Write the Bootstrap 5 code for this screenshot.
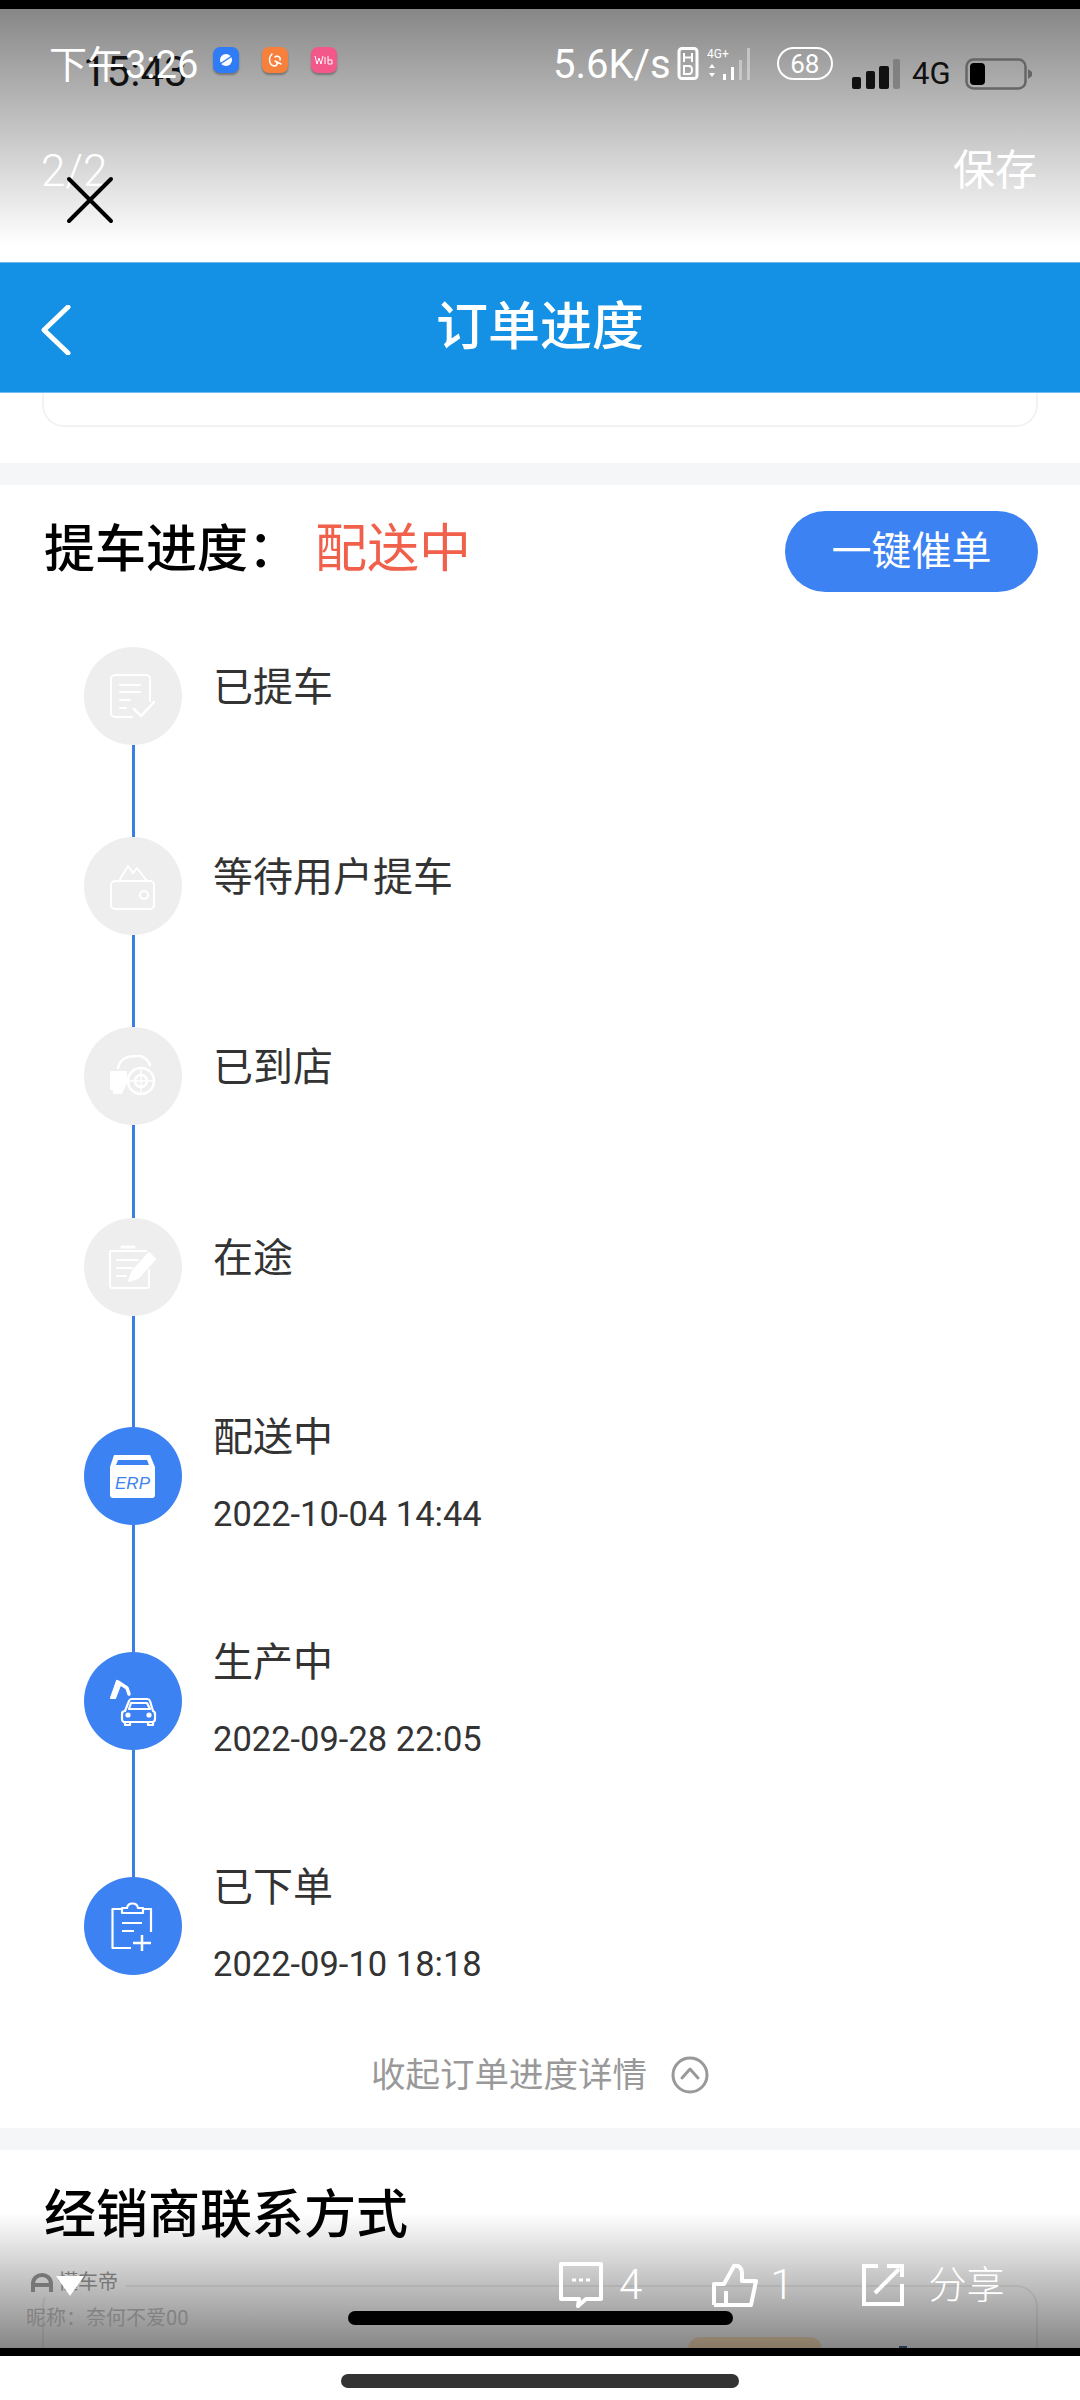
<!DOCTYPE html>
<html lang="zh-CN">
<head>
    <meta charset="UTF-8">
    <title>订单进度</title>
    <link href="https://cdn.jsdelivr.net/npm/bootstrap@5.3.3/dist/css/bootstrap.min.css" rel="stylesheet">
    <style>
        body { width: 1080px; height: 2400px; overflow: hidden; background: #fff; font-family: Roboto, "Noto Sans CJK SC", sans-serif; color: #333; }
        .edge-bar { height: 9px; background: #000; }
        .edge-bar-low { height: 8px; background: #000; }
        .screen { height: 2339px; overflow: hidden; }
        .top-gap { height: 253px; }
        .app-head { height: 131px; background: #1490e4; border-top: 1px solid #6fbcf0; border-bottom: 1px solid #6fbcf0; position: relative; }
        .app-head h1 { font-size: 52px; line-height: 1; font-weight: 500; color: #fff; margin: 0; }
        .back-arrow { position: absolute; left: 40px; top: 42px; }
        .card-tail { height: 34px; margin: 0 42px 36px; border: 2px solid #f2f2f2; border-top: 0; border-radius: 0 0 22px 22px; }
        .band { height: 22px; background: #f5f6f7; }
        .progress-head { padding: 26px 42px 0 44px; height: 162px; }
        .progress-title { font-size: 51px; line-height: 72px; font-weight: 500; color: #000; margin: 3px 0 0; }
        .progress-state { font-size: 52px; line-height: 72px; color: #f0604a; margin: 3px 0 0 16px; }
        .hurry-btn { width: 253px; height: 81px; background: #3d82f2; border: 0; color: #fff; font-size: 40px; line-height: 1; }
        .step-row { padding-left: 84px; }
        .step-h190 { height: 190px; }
        .step-h191 { height: 191px; }
        .step-h209 { height: 209px; }
        .step-h225 { height: 225px; }
        .step-rail { width: 98px; flex: none; }
        .step-dot { width: 98px; height: 98px; flex: none; background: #eee; }
        .step-dot-on { background: #3d82f2; }
        .step-line { width: 3px; flex: 1; background: #3a80e4; margin-left: 48px; }
        .step-text { margin-left: 31px; padding-top: 13px; }
        .step-text-dated { margin-top: -17px; padding-top: 0; }
        .step-name { font-size: 40px; line-height: 56px; color: #333; }
        .step-time { font-size: 34.5px; line-height: 44px; color: #333; margin-top: 26px; }
        .fold-row { height: 142px; padding-top: 66px; color: #999; font-size: 34.5px; line-height: 46px; }
        .dealer-title { font-size: 52px; line-height: 72px; font-weight: 500; color: #000; margin: 30px 0 0 44px; }
        .dealer-card { height: 200px; margin: 33px 42px 0; border: 2px solid #eee; border-radius: 22px; position: relative; }
        .dealer-gap { position: absolute; left: -4px; top: -10px; width: 86px; height: 20px; background: #fff; }
        .dealer-btn { position: absolute; left: 644px; top: 50px; width: 134px; height: 60px; background: #ffe6c0; border-radius: 12px; }
        .dealer-dot { position: absolute; left: 855px; top: 59px; width: 8px; height: 30px; background: #4a6a90; }
        .shade { position: absolute; left: 0; width: 1080px; pointer-events: none; }
        .shade-top { top: 9px; height: 236px; background: linear-gradient(rgba(0,0,0,.47), rgba(0,0,0,0)); }
        .shade-low { top: 2213px; height: 135px; background: linear-gradient(rgba(0,0,0,0), rgba(0,0,0,.47)); }
        .over { position: absolute; line-height: 1; white-space: nowrap; }
        .clock-dark { left: 83px; top: 51px; font-size: 42px; color: #111; }
        .clock-light { left: 49px; top: 46px; font-size: 38px; color: #fff; }
        .app-badges { left: 213px; top: 47px; gap: 23px; }
        .app-badge { width: 26px; height: 26px; border-radius: 7px; box-shadow: 0 2px 2px rgba(0,0,0,.3); }
        .badge-blue { background: #2f7cf6; }
        .badge-orange { background: #f6803c; }
        .badge-pink { background: #f4578a; }
        .net-group { left: 553px; top: 47px; color: #fff; }
        .net-speed { font-size: 40px; line-height: 36px; margin-right: 6px; }
        .net-signal { margin: 0 14px 0 8px; }
        .net-rate { width: 56px; height: 33px; font-size: 26px; line-height: 1; }
        .sim-group { left: 852px; top: 58px; color: #111; }
        .sim-type { font-size: 31px; line-height: 30px; margin: 0 14px 0 12px; }
        .page-count { left: 41px; top: 149px; font-size: 44px; font-weight: 300; color: #fff; }
        .close-x { left: 66px; top: 176px; }
        .save-link { left: 953px; top: 150px; font-size: 42px; color: #fff; }
        .photo-tools { left: 559px; top: 2262px; color: #fff; font-size: 42px; line-height: 44px; font-weight: 300; }
        .tool-count { margin: 0 70px 0 16px; }
        .tool-count-b { margin: 0 67px 0 12px; }
        .share-label { margin-left: 24px; font-size: 38px; }
        .brand-mark { left: 30px; top: 2271px; color: #777; font-size: 20px; line-height: 22px; }
        .nick-name { left: 26px; top: 2308px; font-size: 20px; color: #828282; }
        .pointer-down { left: 56px; top: 2276px; width: 0; height: 0; border-left: 14px solid transparent; border-right: 14px solid transparent; border-top: 20px solid #fff; }
        .pill-dark { left: 348px; top: 2311px; width: 385px; height: 14px; background: #000; border-radius: 7px; }
        .nav-zone { height: 44px; padding-top: 18px; }
        .nav-pill { width: 398px; height: 14px; background: #333; border-radius: 7px; }
    </style>
</head>
<body class="position-relative">
    <div class="edge-bar"></div>
    <div class="screen">
        <div class="top-gap"></div>

        <header class="app-head d-flex align-items-center justify-content-center">
            <svg class="back-arrow" width="32" height="50" viewBox="0 0 32 50" fill="none" stroke="#fff" stroke-width="5" stroke-linecap="round" stroke-linejoin="round"><path d="M28 2 L4 25 L28 48"/></svg>
            <h1>订单进度</h1>
        </header>

        <div class="card-tail"></div>
        <div class="band"></div>

        <div class="progress-head d-flex justify-content-between align-items-start">
            <div class="d-flex">
                <h2 class="progress-title">提车进度：</h2>
                <span class="progress-state">配送中</span>
            </div>
            <button class="btn rounded-pill hurry-btn p-0">一键催单</button>
        </div>

        <div class="step-row step-h190 d-flex">
            <div class="step-rail d-flex flex-column">
                <div class="step-dot rounded-circle">
                    <svg width="98" height="98" viewBox="0 0 98 98" fill="none" stroke="#fff" stroke-width="2" stroke-linecap="round"><path d="M48 70 H31 a4 4 0 0 1 -4 -4 V32 a4 4 0 0 1 4 -4 H62 a4 4 0 0 1 4 4 V54"/><path d="M36 38 H56 M36 45 H56 M36 53 H46 M36 61 H42"/><path d="M50 62 L57 69 L70 55" stroke-width="2.5"/></svg>
                </div>
                <div class="step-line"></div>
            </div>
            <div class="step-text"><div class="step-name">已提车</div></div>
        </div>

        <div class="step-row step-h190 d-flex">
            <div class="step-rail d-flex flex-column">
                <div class="step-dot rounded-circle">
                    <svg width="98" height="98" viewBox="0 0 98 98" fill="none" stroke="#fff" stroke-width="2" stroke-linecap="round" stroke-linejoin="round"><rect x="27" y="44" width="43" height="28" rx="4"/><path d="M35 44 L44 29 L49 36 L53 31 L63 44"/><circle cx="60" cy="58" r="4"/></svg>
                </div>
                <div class="step-line"></div>
            </div>
            <div class="step-text"><div class="step-name">等待用户提车</div></div>
        </div>

        <div class="step-row step-h191 d-flex">
            <div class="step-rail d-flex flex-column">
                <div class="step-dot rounded-circle">
                    <svg width="98" height="98" viewBox="0 0 98 98" fill="none" stroke="#fff" stroke-width="2" stroke-linecap="round" stroke-linejoin="round"><path d="M34 41 C36 31 44 29 54 29 C60 29 64 33 66 38" stroke-width="2.5"/><path d="M27 45 H42 V56 L37 66 H30 V62 H27 Z" fill="#fff"/><circle cx="57" cy="54" r="13" stroke-width="2.5"/><circle cx="57" cy="54" r="6" stroke-width="2.5"/><path d="M57 41 V67 M44 54 H70" stroke-width="1.5"/></svg>
                </div>
                <div class="step-line"></div>
            </div>
            <div class="step-text"><div class="step-name">已到店</div></div>
        </div>

        <div class="step-row step-h209 d-flex">
            <div class="step-rail d-flex flex-column">
                <div class="step-dot rounded-circle">
                    <svg width="98" height="98" viewBox="0 0 98 98" fill="none" stroke="#fff" stroke-width="2" stroke-linecap="round" stroke-linejoin="round"><path d="M62 33 H26 V68 a2 2 0 0 0 2 2 H63 a2 2 0 0 0 2 -2 V52"/><path d="M38 29 H50" stroke-width="3"/><path d="M33 42 H54 M33 50 H48 M33 58 H42"/><path d="M45 63 L48 54 L65 35 L71 41 L54 60 Z" fill="#fff"/></svg>
                </div>
                <div class="step-line"></div>
            </div>
            <div class="step-text"><div class="step-name">在途</div></div>
        </div>

        <div class="step-row step-h225 d-flex">
            <div class="step-rail d-flex flex-column">
                <div class="step-dot step-dot-on rounded-circle">
                    <svg width="98" height="98" viewBox="0 0 98 98"><path d="M30 28 H66 L71 40 V68 a3 3 0 0 1 -3 3 H29 a3 3 0 0 1 -3 -3 V40 Z" fill="#fff"/><path d="M34 33 H63 L65 38 H32 Z" fill="#3d82f2"/><text x="48.500" y="62" text-anchor="middle" font-family="Liberation Sans, sans-serif" font-style="italic" font-size="17" fill="#3d82f2">ERP</text></svg>
                </div>
                <div class="step-line"></div>
            </div>
            <div class="step-text step-text-dated">
                <div class="step-name">配送中</div>
                <div class="step-time">2022-10-04 14:44</div>
            </div>
        </div>

        <div class="step-row step-h225 d-flex">
            <div class="step-rail d-flex flex-column">
                <div class="step-dot step-dot-on rounded-circle">
                    <svg width="98" height="98" viewBox="0 0 98 98" fill="none" stroke="#fff" stroke-width="2.200" stroke-linecap="round" stroke-linejoin="round"><path d="M27 46 L33 29 L36 33 L31 46 Z" fill="#fff"/><path d="M34 30 L43 36 L45 42" stroke-width="3.500"/><path d="M41 59 L45 49 a3 3 0 0 1 3 -2 H63 a3 3 0 0 1 3 2 L69 59 a3 3 0 0 1 2 3 V67 a3 3 0 0 1 -3 3 H42 a3 3 0 0 1 -4 -3 V62 a3 3 0 0 1 3 -3 Z"/><path d="M45 57 L47 51 H63 L66 57 Z"/><circle cx="44" cy="63" r="1.500" fill="#fff"/><circle cx="65" cy="63" r="1.500" fill="#fff"/><path d="M41 70 V73 H46 V70 M64 70 V73 H69 V70"/></svg>
                </div>
                <div class="step-line"></div>
            </div>
            <div class="step-text step-text-dated">
                <div class="step-name">生产中</div>
                <div class="step-time">2022-09-28 22:05</div>
            </div>
        </div>

        <div class="step-row d-flex">
            <div class="step-rail">
                <div class="step-dot step-dot-on rounded-circle">
                    <svg width="98" height="98" viewBox="0 0 98 98" fill="none" stroke="#fff" stroke-width="2.200" stroke-linejoin="round"><path d="M38 32 H28.500 V71 H47"/><path d="M59 32 H67 V55"/><path d="M38 36 V31 H43 C44 25 53 25 54 31 H59 V36 Z"/><path d="M38 46 H58 M38 54 H50"/><path d="M58 58 V74 M49 66 H67" stroke-width="2.500"/></svg>
                </div>
            </div>
            <div class="step-text step-text-dated">
                <div class="step-name">已下单</div>
                <div class="step-time">2022-09-10 18:18</div>
            </div>
        </div>

        <div class="fold-row d-flex justify-content-center">
            <span>收起订单进度详情</span>
            <svg class="ms-4 mt-1" width="38" height="38" viewBox="0 0 38 38" fill="none" stroke="#999" stroke-width="3"><circle cx="19" cy="19" r="17"/><path d="M11 22 L19 13 L27 22" stroke-linecap="round" stroke-linejoin="round"/></svg>
        </div>

        <div class="band"></div>
        <h2 class="dealer-title">经销商联系方式</h2>
        <div class="dealer-card">
            <div class="dealer-gap"></div>
            <div class="dealer-btn"></div>
            <div class="dealer-dot"></div>
        </div>
    </div>
    <div class="edge-bar-low"></div>
    <div class="nav-zone d-flex justify-content-center"><div class="nav-pill"></div></div>

    <!-- photo viewer chrome on top of the page -->
    <div class="shade shade-top"></div>
    <div class="shade shade-low"></div>

    <div class="over clock-dark">15:43</div>
    <div class="over clock-light">下午3:26</div>
    <div class="over app-badges d-flex">
        <div class="app-badge badge-blue d-flex align-items-center justify-content-center">
            <svg width="18" height="18" viewBox="0 0 18 18"><circle cx="9" cy="9" r="6" fill="#fff"/><path d="M3 13 L15 5" stroke="#2f7cf6" stroke-width="1.500"/></svg>
        </div>
        <div class="app-badge badge-orange d-flex align-items-center justify-content-center">
            <svg width="18" height="18" viewBox="0 0 18 18" fill="none" stroke="#fff" stroke-width="1.500" stroke-linecap="round"><path d="M6 3 C2 7 3 14 8 15 C12 15 12 11 9 10 M9 6 C11 4 15 6 14 9 M11 11 L15 13"/></svg>
        </div>
        <div class="app-badge badge-pink d-flex align-items-center justify-content-center">
            <svg width="20" height="12" viewBox="0 0 20 12" fill="none" stroke="#fff" stroke-width="1"><path d="M1 2 L3 10 L5 4 L7 10 L9 2 M11 3 V10 M14 2 V10 H18 V6 H14"/></svg>
        </div>
    </div>

    <div class="over net-group d-flex align-items-start">
        <span class="net-speed">5.6K/s</span>
        <svg width="22" height="33" viewBox="0 0 22 33" fill="none" stroke="#fff"><rect x="2" y="1.500" width="18" height="30" rx="3" stroke-width="3"/><path d="M7 6 V15 M15 6 V15 M7 10.500 H15 M7 19 V27 H12 C16 27 16 19 12 19 Z" stroke-width="2"/></svg>
        <svg class="net-signal" width="56" height="33" viewBox="0 0 56 33"><text x="0" y="11" font-family="Roboto, sans-serif" font-size="12" fill="#fff">4G+</text><path d="M5 17 L8 21 H2 Z M2 26 H8 L5 30 Z" fill="#fff"/><g fill="#fff"><rect x="16" y="27" width="3" height="6"/><rect x="24" y="20" width="3" height="13"/></g><g fill="#ddd" fill-opacity=".6"><rect x="32" y="13" width="3" height="20"/><rect x="40" y="1" width="3" height="32"/></g></svg>
        <div class="net-rate rounded-pill border border-2 border-white d-flex align-items-center justify-content-center">68</div>
    </div>

    <div class="over sim-group d-flex align-items-center">
        <svg width="48" height="30" viewBox="0 0 48 30" fill="#111"><rect x="0" y="18" width="9" height="12" rx="2"/><rect x="14" y="12" width="9" height="18" rx="2"/><rect x="27" y="7" width="10" height="23" rx="2"/><rect x="41" y="0" width="7" height="30" rx="2" fill="#777" fill-opacity=".8"/></svg>
        <span class="sim-type">4G</span>
        <svg width="67" height="32" viewBox="0 0 67 32" fill="none"><rect x="1.500" y="1.500" width="59" height="29" rx="7" stroke="#666" stroke-width="2.500"/><rect x="5" y="5" width="15" height="22" rx="4" fill="#000"/><path d="M63 11 L67 14 V18 L63 21 Z" fill="#666"/></svg>
    </div>

    <div class="over page-count">2/2</div>
    <svg class="over close-x" width="48" height="48" viewBox="0 0 48 48" stroke="#000" stroke-width="4" stroke-linecap="round"><path d="M3 3 L45 45 M45 3 L3 45"/></svg>
    <div class="over save-link">保存</div>

    <div class="over brand-mark d-flex align-items-center">
        <svg width="24" height="19" viewBox="0 0 24 19" fill="none" stroke="#777" stroke-width="4"><path d="M3 19 V11 C3 -1 21 -1 21 11 V19 M3 12 H21"/></svg>
        <span class="ms-1">懂车帝</span>
    </div>
    <div class="over nick-name">昵称：奈何不爱00</div>
    <div class="over pointer-down"></div>

    <div class="over photo-tools d-flex align-items-center">
        <svg width="44" height="46" viewBox="0 0 44 46" fill="none" stroke="#fff" stroke-width="4"><path d="M2 2 H42 V37 H27 L19 44 L20 37 H2 Z" stroke-linejoin="round"/><path d="M13 18 H17 M20 18 H24 M27 18 H31" stroke-width="3"/></svg>
        <span class="tool-count">4</span>
        <svg width="46" height="44" viewBox="0 0 46 44" fill="none" stroke="#fff" stroke-width="4" stroke-linejoin="round"><path d="M2 42 V21 H12 L22 3 C28 2 30 6 30 10 V18 H44 L39 42 H2"/><path d="M14 28 V42"/></svg>
        <span class="tool-count-b">1</span>
        <svg width="44" height="44" viewBox="0 0 44 44" fill="none" stroke="#fff" stroke-width="4"><path d="M17 3 H3 V41 H41 V21"/><path d="M14 30 L38 6 M26 3 H41 V14"/></svg>
        <span class="share-label">分享</span>
    </div>

    <div class="over pill-dark"></div>
</body>
</html>
